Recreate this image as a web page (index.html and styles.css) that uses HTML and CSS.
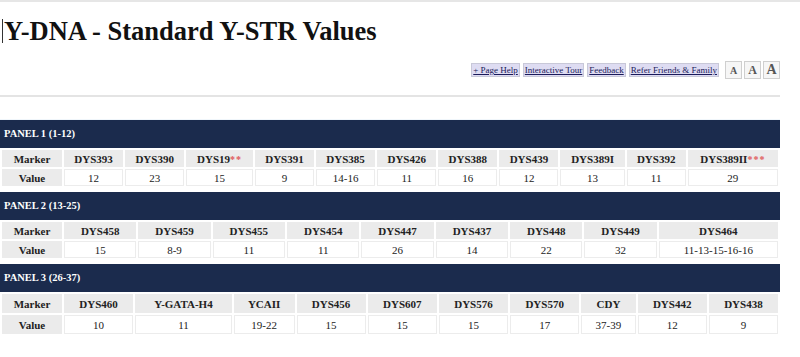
FILE: index.html
```html
<!DOCTYPE html>
<html>
<head>
<meta charset="utf-8">
<title>Y-DNA - Standard Y-STR Values</title>
<link rel="stylesheet" href="styles.css">
</head>
<body>
<div class="page">
  <h1 class="title"><span class="caret"></span>Y-DNA - Standard Y-STR Values</h1>
  <div class="toolbar">
    <a class="tool-link" href="#">+ Page Help</a>
    <a class="tool-link" href="#">Interactive Tour</a>
    <a class="tool-link" href="#">Feedback</a>
    <a class="tool-link" href="#">Refer Friends &amp; Family</a>
    <span class="size-btn size-s">A</span>
    <span class="size-btn size-m">A</span>
    <span class="size-btn size-l">A</span>
  </div>
  <div class="rule"></div>

  <div class="panels">
    <div class="panel-head">PANEL 1 (1-12)</div>
    <table class="str">
      <tr class="markers">
        <th class="label">Marker</th>
        <th>DYS393</th><th>DYS390</th><th>DYS19<span class="ast">**</span></th><th>DYS391</th><th>DYS385</th><th>DYS426</th><th>DYS388</th><th>DYS439</th><th>DYS389I</th><th>DYS392</th><th>DYS389II<span class="ast">***</span></th>
      </tr>
      <tr class="values">
        <th class="label">Value</th>
        <td>12</td><td>23</td><td>15</td><td>9</td><td>14-16</td><td>11</td><td>16</td><td>12</td><td>13</td><td>11</td><td>29</td>
      </tr>
    </table>

    <div class="panel-head">PANEL 2 (13-25)</div>
    <table class="str">
      <tr class="markers">
        <th class="label">Marker</th>
        <th>DYS458</th><th>DYS459</th><th>DYS455</th><th>DYS454</th><th>DYS447</th><th>DYS437</th><th>DYS448</th><th>DYS449</th><th>DYS464</th>
      </tr>
      <tr class="values">
        <th class="label">Value</th>
        <td>15</td><td>8-9</td><td>11</td><td>11</td><td>26</td><td>14</td><td>22</td><td>32</td><td>11-13-15-16-16</td>
      </tr>
    </table>

    <div class="panel-head">PANEL 3 (26-37)</div>
    <table class="str str-last">
      <tr class="markers">
        <th class="label">Marker</th>
        <th>DYS460</th><th>Y-GATA-H4</th><th>YCAII</th><th>DYS456</th><th>DYS607</th><th>DYS576</th><th>DYS570</th><th>CDY</th><th>DYS442</th><th>DYS438</th>
      </tr>
      <tr class="values">
        <th class="label">Value</th>
        <td>10</td><td>11</td><td>19-22</td><td>15</td><td>15</td><td>15</td><td>17</td><td>37-39</td><td>12</td><td>9</td>
      </tr>
    </table>
  </div>
</div>
</body>
</html>
```

FILE: styles.css
```css
html, body {
  margin: 0;
  padding: 0;
  background: #ffffff;
}

body {
  font-family: "Liberation Serif", "Times New Roman", serif;
  color: #111;
  border-top: 2px solid #e6e6e6;
}

.page {
  width: 780px;
}

.title {
  margin: 14px 0 0 2px;
  font-size: 26.5px;
  line-height: 30px;
  font-weight: bold;
  color: #111;
  display: flex;
  align-items: center;
}

.caret {
  display: inline-block;
  width: 1px;
  height: 24px;
  background: #333;
  margin-right: 1px;
}

.toolbar {
  margin-top: 15px;
  display: flex;
  justify-content: flex-end;
  align-items: center;
  gap: 3px;
  height: 18px;
}

.tool-link {
  font-size: 9px;
  line-height: 12px;
  color: #1a1a5a;
  background: #dedcf2;
  border: 1px solid #c8c8d8;
  padding: 0 1px;
  text-decoration: underline;
}

.size-btn {
  display: inline-flex;
  align-items: center;
  justify-content: center;
  width: 15px;
  height: 16px;
  border: 1px solid #cfcfcf;
  background: #f6f6f6;
  color: #555;
  font-weight: bold;
}

.size-s { font-size: 10px; margin-left: 3px; }
.size-m { font-size: 12px; margin-left: -1px; }
.size-l { font-size: 14px; margin-left: -1px; }

.rule {
  margin-top: 16px;
  height: 2px;
  background: #e4e4e4;
  width: 780px;
}

.panels {
  margin-top: 22px;
  border-top: 1px solid #f0f6fb;
}

.panel-head {
  background: #1b2b4d;
  color: #fff;
  font-size: 10.5px;
  font-weight: bold;
  height: 28px;
  line-height: 28px;
  padding-left: 4px;
  margin-top: 4px;
}

.panel-head:first-child {
  margin-top: 0;
}

.str {
  width: 780px;
  border-collapse: separate;
  border-spacing: 2px;
  font-size: 11px;
}

.str th,
.str td {
  height: 17px;
  padding: 0 6px;
  text-align: center;
  white-space: nowrap;
}

.str th {
  background: #ebebeb;
  font-weight: bold;
  color: #222;
}

.str td {
  background: #fff;
  border: 1px solid #ececec;
  height: 15px;
  color: #222;
}

.str-last th {
  height: 19px;
}

.str-last td {
  height: 17px;
}

.str .label {
  width: 48px;
}

.ast {
  color: #e05a5a;
  font-size: 10px;
  letter-spacing: 1px;
}
```
